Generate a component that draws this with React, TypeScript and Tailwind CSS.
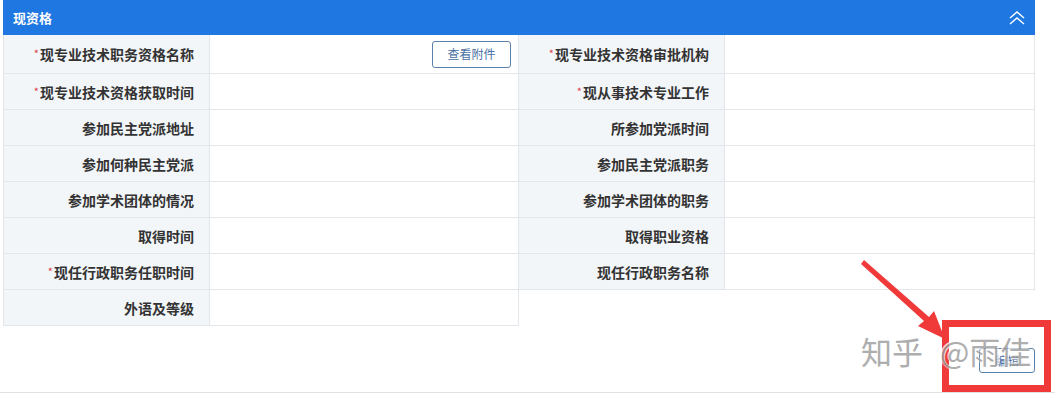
import React from "react";

const font = { fontFamily: '"Microsoft YaHei", "Noto Sans CJK SC", "Noto Sans", sans-serif' };

type Cell = { label: string; req?: boolean; button?: boolean };

const rows: Cell[][] = [
  [{ label: "现专业技术职务资格名称", req: true, button: true }, { label: "现专业技术资格审批机构", req: true }],
  [{ label: "现专业技术资格获取时间", req: true }, { label: "现从事技术专业工作", req: true }],
  [{ label: "参加民主党派地址" }, { label: "所参加党派时间" }],
  [{ label: "参加何种民主党派" }, { label: "参加民主党派职务" }],
  [{ label: "参加学术团体的情况" }, { label: "参加学术团体的职务" }],
  [{ label: "取得时间" }, { label: "取得职业资格" }],
  [{ label: "现任行政职务任职时间", req: true }, { label: "现任行政职务名称" }],
  [{ label: "外语及等级" }],
];

function Label({ c }: { c: Cell }) {
  return (
    <div className="flex items-center justify-end pr-[15px] bg-[#f3f6f9] border-r border-b border-[#e3e6ea] text-[14px] font-bold text-[#333333] leading-none">
      <span className="whitespace-nowrap">
        {c.req && <span className="relative -top-[2px] text-[#e0424a] text-[11px] font-normal mr-[1px]">*</span>}
        {c.label}
      </span>
    </div>
  );
}

function Value({ c }: { c?: Cell }) {
  return (
    <div className="flex items-center justify-end pr-[7px] bg-white border-r border-b border-[#e3e6ea]">
      {c?.button && (
        <button className="w-[79px] h-[27px] border border-[#5b82ad] rounded-[3px] text-[12px] text-[#4a6fa3] bg-white leading-none">
          查看附件
        </button>
      )}
    </div>
  );
}

export default function App() {
  return (
    <div className="relative w-[1055px] h-[397px] bg-white overflow-hidden" style={font}>
      <div className="pl-[3px] w-[1035px]">
        <div className="h-[35px] bg-[#1f77e2] flex items-center justify-between pl-[10px] pr-[9px]">
          <span className="text-white text-[13px] font-bold">现资格</span>
          <svg width="18" height="16" viewBox="0 0 18 16" fill="none" stroke="white" strokeWidth="1.4">
            <polyline points="2,8 9,2 16,8" />
            <polyline points="2,14 9,8 16,14" />
          </svg>
        </div>
        <div className="grid grid-cols-[206px_309px_206px_310px] border-l border-[#e3e6ea]">
          {rows.map((r, i) => (
            <React.Fragment key={i}>
              <div className={`${i === 0 ? "h-[39px]" : "h-[36px]"} grid`}>
                <Label c={r[0]} />
              </div>
              <div className={`${i === 0 ? "h-[39px]" : "h-[36px]"} grid`}>
                <Value c={r[0]} />
              </div>
              {r[1] ? (
                <>
                  <div className="grid">
                    <Label c={r[1]} />
                  </div>
                  <div className="grid">
                    <Value />
                  </div>
                </>
              ) : (
                <>
                  <div />
                  <div />
                </>
              )}
            </React.Fragment>
          ))}
        </div>
      </div>

      <div className="absolute left-0 right-0 top-[392px] h-px bg-[#e2e2e2]" />

      <button className="absolute left-[979px] top-[348px] w-[56px] h-[25px] border border-[#5b82ad] rounded-[3px] bg-white text-[12px] text-[#4a6fa3] leading-none">
        编辑
      </button>

      <div className="absolute left-[942px] top-[320px] w-[109px] h-[72px] border-[7px] border-[#f03a3a]" />

      <svg className="absolute left-0 top-0" width="1055" height="397" viewBox="0 0 1055 397">
        <polygon points="861,264 864,260 929,317 934,311 945,339 918,326 924,321" fill="#f03a3a" />
      </svg>

      <div
        className="absolute left-[861px] top-[335px] text-[31px] leading-none text-[#9a9a9a] whitespace-nowrap flex"
        style={{ textShadow: "0 0 2px #fff, 1px 1px 0 #fff, -1px -1px 0 #fff", opacity: 0.8 }}
      >
        <span>知乎</span>
        <span className="ml-[17px]">@雨佳</span>
      </div>
    </div>
  );
}
